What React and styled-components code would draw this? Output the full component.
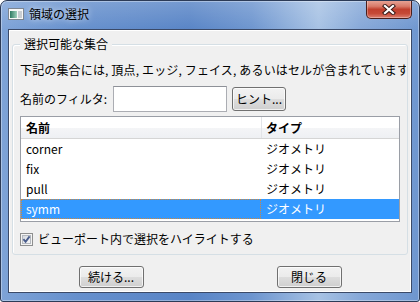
import React from 'react';
import styled, { createGlobalStyle } from 'styled-components';

const Global = createGlobalStyle`
  html, body { margin: 0; padding: 0; background: #ffffff; }
  body {
    font-family: "Noto Sans CJK JP", "Noto Sans", sans-serif;
    font-size: 12px;
    color: #000;
  }
  * { box-sizing: border-box; }
`;

const Window = styled.div`
  width: 420px;
  height: 302px;
  display: flex;
  flex-direction: column;
  border: 1px solid #2c3b57;
  border-radius: 7px 7px 3px 3px;
  overflow: hidden;
  background:
    linear-gradient(to bottom, rgba(255,255,255,0.18), rgba(255,255,255,0) 30px),
    linear-gradient(to right, #7ea3d7 0%, #6690cd 18%, #5884c6 45%, #6d95cf 60%, #a7c2e4 76%, #86a8d8 86%, #6e96cf 100%);
  box-shadow: inset 0 0 0 1px rgba(255,255,255,0.35);
`;

const TitleBar = styled.div`
  height: 28px;
  display: flex;
  align-items: center;
  padding: 0 0 2px 7px;
`;

const TitleIcon = styled.svg`
  width: 16px;
  height: 12px;
  flex: none;
`;

const TitleText = styled.span`
  margin-left: 5px;
  line-height: 16px;
  color: #000;
  text-shadow: 0 0 6px rgba(255,255,255,0.9);
`;

const CloseButton = styled.div`
  width: 46px;
  height: 19px;
  margin-left: auto;
  margin-right: 7px;
  margin-top: -1px;
  align-self: flex-start;
  border: 1px solid #4a1e1b;
  border-top: none;
  border-radius: 0 0 5px 5px;
  background: linear-gradient(#e9a99c 0%, #d97a69 35%, #c1402e 52%, #c64a37 75%, #dc8071 100%);
  box-shadow: inset 0 0 0 1px rgba(255,255,255,0.3);
  display: flex;
  align-items: center;
  justify-content: center;
`;

const Client = styled.div`
  flex: 1;
  margin: 0 7px 8px 7px;
  background: #f0f0f0;
  border: 1px solid #3b4a68;
  box-shadow: inset 0 0 0 1px #ffffff;
  display: flex;
  flex-direction: column;
  padding: 0 3px;
`;

const GroupBox = styled.div`
  position: relative;
  margin-top: 14px;
  border: 1px solid #d5dfe5;
  border-radius: 3px;
  padding: 17px 7px 7px 7px;
  box-shadow: inset 1px 1px 0 #fff;
`;

const Legend = styled.span`
  position: absolute;
  top: -9px;
  left: 7px;
  padding: 0 4px;
  background: #f0f0f0;
  line-height: 16px;
`;

const Description = styled.div`
  line-height: 16px;
  white-space: nowrap;
  overflow: hidden;
  margin-right: -6px;
  letter-spacing: 0.15px;
`;

const FilterRow = styled.div`
  margin-top: 8px;
  display: flex;
  align-items: center;
`;

const FieldLabel = styled.span`
  width: 93px;
  line-height: 16px;
  white-space: nowrap;
`;

const TextInput = styled.div`
  width: 114px;
  height: 26px;
  background: #fff;
  border: 1px solid #abadb3;
  border-top-color: #8e9198;
`;

const Button = styled.div`
  width: ${p => p.$w || 65}px;
  height: ${p => p.$h || 22}px;
  margin-left: ${p => p.$ml || 0}px;
  border: 1px solid #707070;
  border-radius: 3px;
  background: linear-gradient(#f2f2f2 0%, #ebebeb 50%, #dddddd 51%, #cfcfcf 100%);
  box-shadow: inset 0 0 0 1px rgba(255,255,255,0.7);
  display: flex;
  align-items: center;
  justify-content: center;
  line-height: 16px;
  white-space: nowrap;
`;

const Table = styled.div`
  margin-top: 4px;
  height: 106px;
  border: 1px solid #9a9ea6;
  background: #fff;
  overflow: hidden;
`;

const HeaderRow = styled.div`
  display: grid;
  grid-template-columns: 240px 1fr;
  height: 22px;
  border-bottom: 1px solid #d5d5d5;
  background: linear-gradient(#ffffff 0%, #ffffff 50%, #f4f5f7 51%, #eef0f3 100%);
`;

const HeaderCell = styled.div`
  padding-left: ${p => (p.$divider ? 4 : 5)}px;
  border-left: ${p => (p.$divider ? '1px solid #e2e4e8' : 'none')};
  display: flex;
  align-items: center;
  font-weight: bold;
  line-height: 16px;
`;

const Row = styled.div`
  display: grid;
  grid-template-columns: 240px 1fr;
  height: 20px;
  background: ${p => (p.$selected ? '#3399ff' : 'transparent')};
  color: ${p => (p.$selected ? '#ffffff' : '#000')};
`;

const Cell = styled.div`
  padding-left: ${p => (p.$focus ? 4 : 5)}px;
  display: flex;
  align-items: center;
  line-height: 16px;
  border: ${p => (p.$focus ? '1px dotted #d0873a' : 'none')};
  white-space: nowrap;
`;

const CheckRow = styled.div`
  margin-top: 9px;
  height: 16px;
  display: flex;
  align-items: center;
  gap: 5px;
  line-height: 16px;
`;

const CheckBox = styled.svg`
  width: 13px;
  height: 13px;
  flex: none;
`;

const ButtonRow = styled.div`
  margin-top: 11px;
  display: flex;
  justify-content: space-around;
`;

const rows = [
  { name: 'corner', type: 'ジオメトリ' },
  { name: 'fix', type: 'ジオメトリ' },
  { name: 'pull', type: 'ジオメトリ' },
  { name: 'symm', type: 'ジオメトリ', selected: true },
];

export default function App() {
  return (
    <>
      <Global />
      <Window>
        <TitleBar>
          <TitleIcon viewBox="0 0 16 12">
            <defs>
              <linearGradient id="ti" x1="0" x2="1" y1="0" y2="0">
                <stop offset="0" stopColor="#2f7a62" />
                <stop offset="1" stopColor="#9fd0bc" />
              </linearGradient>
            </defs>
            <rect x="0.5" y="0.5" width="15" height="11" fill="#f7f7f7" stroke="#7d8590" />
            <rect x="2" y="3" width="7" height="7" fill="url(#ti)" />
            <rect x="10" y="3" width="4" height="7" fill="#c9cdd2" />
          </TitleIcon>
          <TitleText>領域の選択</TitleText>
          <CloseButton>
            <svg width="14" height="11" viewBox="0 0 14 11">
              <path d="M3 2 L11 9 M11 2 L3 9" stroke="#3b1c1a" strokeWidth="4.2" strokeLinecap="square" />
              <path d="M3 2 L11 9 M11 2 L3 9" stroke="#ffffff" strokeWidth="2.2" strokeLinecap="square" />
            </svg>
          </CloseButton>
        </TitleBar>
        <Client>
          <GroupBox>
            <Legend>選択可能な集合</Legend>
            <Description>下記の集合には, 頂点, エッジ, フェイス, あるいはセルが含まれています</Description>
            <FilterRow>
              <FieldLabel>名前のフィルタ:</FieldLabel>
              <TextInput />
              <Button $w={54} $h={24} $ml={5}>ヒント...</Button>
            </FilterRow>
            <Table>
              <HeaderRow>
                <HeaderCell>名前</HeaderCell>
                <HeaderCell $divider>タイプ</HeaderCell>
              </HeaderRow>
              {rows.map(r => (
                <Row key={r.name} $selected={r.selected}>
                  <Cell $focus={r.selected}>{r.name}</Cell>
                  <Cell>{r.type}</Cell>
                </Row>
              ))}
            </Table>
            <CheckRow>
              <CheckBox viewBox="0 0 13 13">
                <defs>
                  <linearGradient id="cb" x1="0" x2="1" y1="0" y2="1">
                    <stop offset="0" stopColor="#d2d6dc" />
                    <stop offset="1" stopColor="#f8f9fa" />
                  </linearGradient>
                </defs>
                <rect x="0.5" y="0.5" width="12" height="12" fill="#f4f4f4" stroke="#8e8f8f" />
                <rect x="2.5" y="2.5" width="8" height="8" fill="url(#cb)" stroke="#b5b9bf" />
                <path d="M3.4 6.2 L5.6 8.8 L9.6 3.4" fill="none" stroke="#4a5d8c" strokeWidth="1.9" />
              </CheckBox>
              <span>ビューポート内で選択をハイライトする</span>
            </CheckRow>
          </GroupBox>
          <ButtonRow>
            <Button>続ける...</Button>
            <Button>閉じる</Button>
          </ButtonRow>
        </Client>
      </Window>
    </>
  );
}
